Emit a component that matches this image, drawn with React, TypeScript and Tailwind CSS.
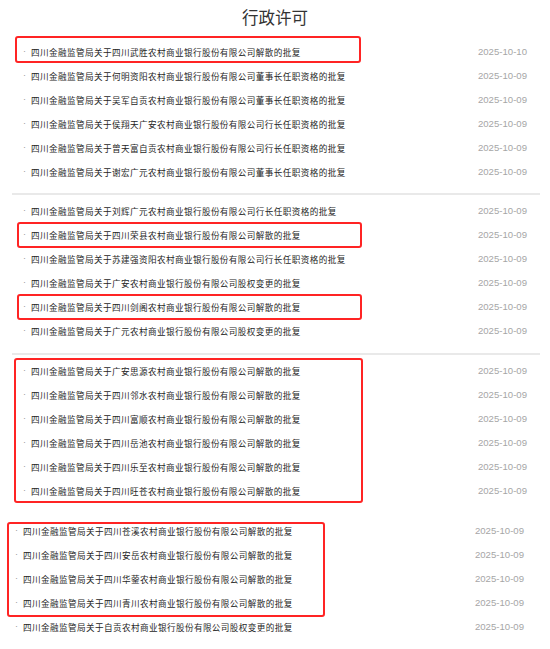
import React from "react";

type Row = { t: string; d: string };
type Box = { top: number; left: number; width: number; height: number };

const P = "四川金融监管局关于";

const s1: Row[] = [
  { t: P + "四川武胜农村商业银行股份有限公司解散的批复", d: "2025-10-10" },
  { t: P + "何明资阳农村商业银行股份有限公司董事长任职资格的批复", d: "2025-10-09" },
  { t: P + "吴军自贡农村商业银行股份有限公司董事长任职资格的批复", d: "2025-10-09" },
  { t: P + "侯翔天广安农村商业银行股份有限公司行长任职资格的批复", d: "2025-10-09" },
  { t: P + "曾天富自贡农村商业银行股份有限公司行长任职资格的批复", d: "2025-10-09" },
  { t: P + "谢宏广元农村商业银行股份有限公司董事长任职资格的批复", d: "2025-10-09" },
];
const s2: Row[] = [
  { t: P + "刘辉广元农村商业银行股份有限公司行长任职资格的批复", d: "2025-10-09" },
  { t: P + "四川荣县农村商业银行股份有限公司解散的批复", d: "2025-10-09" },
  { t: P + "苏建强资阳农村商业银行股份有限公司行长任职资格的批复", d: "2025-10-09" },
  { t: P + "广安农村商业银行股份有限公司股权变更的批复", d: "2025-10-09" },
  { t: P + "四川剑阁农村商业银行股份有限公司解散的批复", d: "2025-10-09" },
  { t: P + "广元农村商业银行股份有限公司股权变更的批复", d: "2025-10-09" },
];
const s3: Row[] = ["广安思源", "四川邻水", "四川富顺", "四川岳池", "四川乐至", "四川旺苍"].map((n) => ({
  t: P + n + "农村商业银行股份有限公司解散的批复",
  d: "2025-10-09",
}));
const s4: Row[] = [
  ...["四川苍溪", "四川安岳", "四川华蓥", "四川青川"].map((n) => ({
    t: P + n + "农村商业银行股份有限公司解散的批复",
    d: "2025-10-09",
  })),
  { t: P + "自贡农村商业银行股份有限公司股权变更的批复", d: "2025-10-09" },
];

function Section({
  rows,
  boxes,
  shifted,
}: {
  rows: Row[];
  boxes: Box[];
  shifted?: boolean;
}) {
  return (
    <div className={shifted ? "relative pl-[15px] pr-[26px]" : "relative pl-[23px] pr-[23px]"}>
      {rows.map((r, i) => (
        <div key={i} className="flex h-[24px] items-center justify-between">
          <div className="flex items-center">
            <span className="w-[8px] text-[9px] text-[#9a9a9a]" style={{ fontFamily: "'Liberation Sans', sans-serif" }}>·</span>
            <span
              className="text-[8.6px] leading-none tracking-[0.4px] text-[#262626]"
              style={{ fontFamily: "'Noto Sans CJK SC', sans-serif" }}
            >
              {r.t}
            </span>
          </div>
          <span
            className="text-[9.6px] leading-none text-[#a6a6a6]"
            style={{ fontFamily: "'Liberation Sans', sans-serif" }}
          >
            {r.d}
          </span>
        </div>
      ))}
      {boxes.map((b, i) => (
        <div
          key={i}
          className="pointer-events-none absolute rounded-[3px] border-2 border-[#ff2424]"
          style={{ top: b.top, left: b.left, width: b.width, height: b.height }}
        />
      ))}
    </div>
  );
}

export default function App() {
  return (
    <div className="w-[550px] h-[649px] overflow-hidden bg-white">
      <div
        className="flex h-[35px] items-center justify-center text-[16.5px] text-[#333]"
        style={{ fontFamily: "'Noto Sans CJK SC', sans-serif" }}
      >
        行政许可
      </div>
      <div className="h-[5px]" />
      <Section rows={s1} boxes={[{ top: -4, left: 15, width: 346, height: 27 }]} />
      <div className="mt-[9px] ml-[12px] h-[2px] w-[528px] bg-[#e9e9e9]" />
      <div className="h-[4px]" />
      <Section
        rows={s2}
        boxes={[
          { top: 23, left: 17, width: 345, height: 26 },
          { top: 95, left: 17, width: 345, height: 26 },
        ]}
      />
      <div className="mt-[10px] ml-[12px] h-[2px] w-[528px] bg-[#e9e9e9]" />
      <div className="h-[4px]" />
      <Section rows={s3} boxes={[{ top: -1, left: 14, width: 349, height: 145 }]} />
      <div className="h-[16px]" />
      <Section rows={s4} shifted boxes={[{ top: 3, left: 7, width: 318, height: 95 }]} />
    </div>
  );
}
